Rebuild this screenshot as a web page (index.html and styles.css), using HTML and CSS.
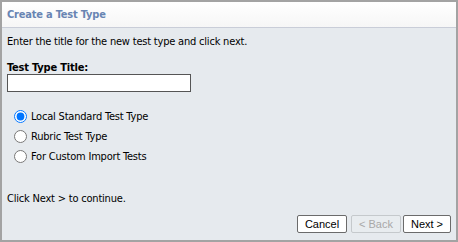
FILE: index.html
```html
<!DOCTYPE html>
<html lang="en">
<head>
    <meta charset="UTF-8">
    <meta name="viewport" content="width=device-width, initial-scale=1.0">
    <title>Create a Test Type</title>
    <link rel="stylesheet" href="styles.css">
</head>
<body>
    <div class="dialog">
        <div class="dialog-header">Create a Test Type</div>
        <div class="dialog-body">
            <p class="intro">Enter the title for the new test type and click next.</p>
            <label class="field-label" for="title">Test Type Title:</label>
            <input type="text" class="title-input" id="title">
            <div class="options">
                <label class="option"><input type="radio" name="kind" checked>Local Standard Test Type</label>
                <label class="option"><input type="radio" name="kind">Rubric Test Type</label>
                <label class="option"><input type="radio" name="kind">For Custom Import Tests</label>
            </div>
            <p class="hint">Click Next &gt; to continue.</p>
            <div class="buttons">
                <button class="btn btn-cancel">Cancel</button>
                <button class="btn btn-back" disabled>&lt; Back</button>
                <button class="btn btn-next">Next &gt;</button>
            </div>
        </div>
    </div>
</body>
</html>
```

FILE: styles.css
```css
body {
    margin: 0;
    background: #a3a3a3;
    font-family: "DejaVu Sans Condensed", "DejaVu Sans", sans-serif;
    font-size: 11px;
    letter-spacing: -0.2px;
    color: #000;
}
.dialog {
    margin: 2px;
    height: 238px;
    display: flex;
    flex-direction: column;
    background: #e6eaee;
}
.dialog-header {
    height: 25px;
    line-height: 25px;
    padding-left: 5px;
    background: linear-gradient(#ffffff, #f6f6f6);
    border-bottom: 1px solid #c9cdd8;
    color: #6985b3;
    font-weight: bold;
}
.dialog-body {
    flex: 1;
    display: flex;
    flex-direction: column;
    padding: 0 5px 7px 5px;
}
.intro {
    margin: 7px 0 0 0;
}
.field-label {
    margin-top: 13px;
    font-weight: bold;
}
.title-input {
    width: 184px;
    height: 18px;
    box-sizing: border-box;
    margin: 0;
    border: 1px solid #555;
    background: #fff;
}
.options {
    margin-top: 16px;
    padding-left: 2px;
    display: flex;
    flex-direction: column;
    gap: 3px;
}
.option {
    display: flex;
    align-items: center;
    height: 17px;
}
.option input {
    margin: 0 4px 0 5px;
}
.hint {
    margin: 27px 0 0 0;
}
.buttons {
    margin-top: auto;
    display: flex;
    justify-content: flex-end;
    letter-spacing: 0;
}
.btn {
    font-family: "Liberation Sans", Arial, sans-serif;
    font-size: 11px;
    height: 18px;
    padding: 0;
    background: #fff;
    border: 1px solid #6b6b6b;
    border-radius: 2px;
    color: #000;
}
.btn-cancel {
    width: 50px;
}
.btn-back {
    width: 50px;
    margin-left: 4px;
}
.btn-next {
    width: 48px;
    margin-left: 2px;
}
.btn:disabled {
    background: #e8ecef;
    border-color: #c5c9cc;
    color: #a8a8a8;
}
```
